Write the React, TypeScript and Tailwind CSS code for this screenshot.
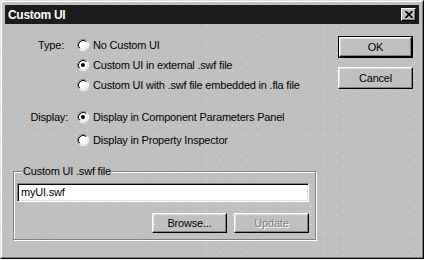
import React from "react";

const ui = "font-['Liberation_Sans',Arial,sans-serif] text-[11px] tracking-[-0.2px] text-black";

function Radio({ checked }: { checked?: boolean }) {
  return (
    <svg width="12" height="12" viewBox="0 0 12 12" className="shrink-0">
      <circle cx="6" cy="6" r="5" fill="#fff" />
      <path d="M2.11 9.89 A5.5 5.5 0 0 1 9.89 2.11" fill="none" stroke="#808080" />
      <path d="M9.89 2.11 A5.5 5.5 0 0 1 2.11 9.89" fill="none" stroke="#fff" />
      <path d="M2.82 9.18 A4.5 4.5 0 0 1 9.18 2.82" fill="none" stroke="#000" />
      <path d="M9.18 2.82 A4.5 4.5 0 0 1 2.82 9.18" fill="none" stroke="#dfdfdf" />
      {checked && <circle cx="6" cy="6" r="2" fill="#000" />}
    </svg>
  );
}

function Option({ label, checked }: { label: string; checked?: boolean }) {
  return (
    <div className="h-[20px] flex items-center gap-[4px] whitespace-nowrap">
      <Radio checked={checked} />
      <span>{label}</span>
    </div>
  );
}

function Button({ children, disabled, isDefault, className = "" }: { children: React.ReactNode; disabled?: boolean; isDefault?: boolean; className?: string }) {
  const face = (
    <div className="w-full h-full flex items-center justify-center border border-t-white border-l-white border-r-black border-b-black shadow-[inset_-1px_-1px_0_#808080,inset_1px_1px_0_#dfdfdf]">
      <span className={disabled ? "text-[#808080] [text-shadow:1px_1px_0_#fff]" : ""}>{children}</span>
    </div>
  );
  return (
    <div className={"w-[75px] " + className + (isDefault ? " border border-black" : "")}>{face}</div>
  );
}

export default function App() {
  return (
    <div className={"w-[426px] h-[260px] bg-white " + ui}>
      <div className="w-[424px] h-[259px] bg-[#c0c0c0] border border-t-[#dfdfdf] border-l-[#dfdfdf] border-r-black border-b-black">
        <div className="h-full flex flex-col border border-t-white border-l-white border-r-[#808080] border-b-[#808080] p-[3px] bg-[radial-gradient(circle,#dedede_0.7px,transparent_1px),radial-gradient(circle,#d8d8d8_0.7px,transparent_1px)] bg-[length:13px_9px,17px_11px] bg-[position:3px_2px,9px_6px]">
          {/* title bar */}
          <div className="h-[19px] bg-[#1c1c1c] flex items-center justify-between pl-[3px] pr-[3px]">
            <span className="text-white font-bold text-[12px] tracking-[-0.3px]">Custom UI</span>
            <div className="w-[15px] h-[13px] bg-[#c0c0c0] flex items-center justify-center border border-t-white border-l-white border-r-black border-b-black shadow-[inset_-1px_-1px_0_#808080]">
              <svg width="8" height="7" viewBox="0 0 8 7">
                <path d="M0.5 0 L7.5 7 M7.5 0 L0.5 7" stroke="#000" strokeWidth="1.6" />
              </svg>
            </div>
          </div>

          {/* body */}
          <div className="flex pl-[8px] pt-[11px]">
            <div className="w-[304px] flex flex-col">
              <div className="flex">
                <div className="w-[64px] shrink-0 pr-[13px] text-right h-[20px] leading-[20px]">Type:</div>
                <div className="flex flex-col">
                  <Option label="No Custom UI" />
                  <Option label="Custom UI in external .swf file" checked />
                  <Option label="Custom UI with .swf file embedded in .fla file" />
                </div>
              </div>

              <div className="flex mt-[12px]">
                <div className="w-[64px] shrink-0 pr-[9px] text-right h-[20px] leading-[20px]">Display:</div>
                <div className="flex flex-col gap-[3px]">
                  <Option label="Display in Component Parameters Panel" checked />
                  <Option label="Display in Property Inspector" />
                </div>
              </div>

              <div className="relative mt-[21px] w-[303px] h-[69px] border border-[#808080] shadow-[1px_1px_0_#fff,inset_1px_1px_0_#fff] pl-[3px] pt-[11px]">
                <span className="absolute left-[8px] top-[-8px] px-[1px] bg-[#c0c0c0] leading-[14px] whitespace-nowrap">Custom UI .swf file</span>
                <div className="w-[292px] h-[19px] bg-white border border-t-[#808080] border-l-[#808080] border-r-white border-b-white shadow-[inset_1px_1px_0_#000,inset_-1px_-1px_0_#dfdfdf] flex items-center pl-[3px]">
                  myUI.swf
                </div>
                <div className="w-[292px] flex justify-end gap-[7px] mt-[11px]">
                  <Button className="h-[20px]">Browse...</Button>
                  <Button className="h-[20px]" disabled>Update</Button>
                </div>
              </div>
            </div>

            <div className="ml-[21px] mt-[1px] flex flex-col gap-[9px]">
              <Button className="h-[22px]" isDefault>OK</Button>
              <Button className="h-[22px]">Cancel</Button>
            </div>
          </div>
        </div>
      </div>
    </div>
  );
}
